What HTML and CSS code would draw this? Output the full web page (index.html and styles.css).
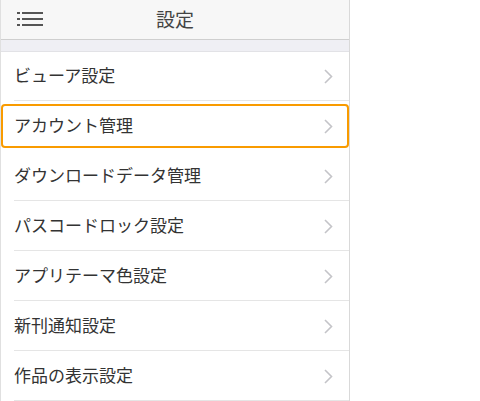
FILE: index.html
```html
<!DOCTYPE html>
<html lang="ja">
<head>
<meta charset="utf-8">
<link rel="stylesheet" href="styles.css">
</head>
<body>
<div class="app">
  <header class="bar">
    <span class="menu">
      <svg width="26" height="14" viewBox="0 0 26 14"><g fill="#555"><rect x="0" y="0" width="3" height="2"/><rect x="5" y="0" width="21" height="2"/><rect x="0" y="6" width="3" height="2"/><rect x="5" y="6" width="21" height="2"/><rect x="0" y="12" width="3" height="2"/><rect x="5" y="12" width="21" height="2"/></g></svg>
    </span>
    <h1 class="title">設定</h1>
  </header>
  <div class="gap"></div>
  <ul class="list">
    <li class="item"><span class="label">ビューア設定</span><svg class="chev" width="9" height="15" viewBox="0 0 9 15"><polyline points="1,1 7.5,7.5 1,14" fill="none" stroke="#c4c4c8" stroke-width="1.6"/></svg></li>
    <li class="item active"><span class="label">アカウント管理</span><svg class="chev" width="9" height="15" viewBox="0 0 9 15"><polyline points="1,1 7.5,7.5 1,14" fill="none" stroke="#c4c4c8" stroke-width="1.6"/></svg></li>
    <li class="item"><span class="label">ダウンロードデータ管理</span><svg class="chev" width="9" height="15" viewBox="0 0 9 15"><polyline points="1,1 7.5,7.5 1,14" fill="none" stroke="#c4c4c8" stroke-width="1.6"/></svg></li>
    <li class="item"><span class="label">パスコードロック設定</span><svg class="chev" width="9" height="15" viewBox="0 0 9 15"><polyline points="1,1 7.5,7.5 1,14" fill="none" stroke="#c4c4c8" stroke-width="1.6"/></svg></li>
    <li class="item"><span class="label">アプリテーマ色設定</span><svg class="chev" width="9" height="15" viewBox="0 0 9 15"><polyline points="1,1 7.5,7.5 1,14" fill="none" stroke="#c4c4c8" stroke-width="1.6"/></svg></li>
    <li class="item"><span class="label">新刊通知設定</span><svg class="chev" width="9" height="15" viewBox="0 0 9 15"><polyline points="1,1 7.5,7.5 1,14" fill="none" stroke="#c4c4c8" stroke-width="1.6"/></svg></li>
    <li class="item"><span class="label">作品の表示設定</span><svg class="chev" width="9" height="15" viewBox="0 0 9 15"><polyline points="1,1 7.5,7.5 1,14" fill="none" stroke="#c4c4c8" stroke-width="1.6"/></svg></li>
  </ul>
</div>
</body>
</html>
```
FILE: styles.css
```css
* { box-sizing: border-box; }
html, body { margin: 0; padding: 0; background: #fff; }
body { font-family: "Noto Sans CJK JP", "Noto Sans", sans-serif; color: #333; }
.app { width: 350px; height: 401px; border-right: 1px solid #d9d9d9; border-left: 1px solid #e0e0e0; overflow: hidden; }
.bar { height: 40px; background: #f7f7f7; border-bottom: 1px solid #cfcfcf; display: flex; align-items: center; justify-content: center; position: relative; }
.menu { position: absolute; left: 16px; top: 12px; display: flex; }
.title { margin: 0 0 3px; font-size: 19px; font-weight: 400; color: #444; line-height: 1; }
.gap { height: 12px; background: #efeff4; border-bottom: 1px solid #e2e2e6; }
.list { list-style: none; margin: -1px 0 0; padding: 0; }
.item { height: 50px; display: flex; align-items: center; justify-content: space-between; padding: 0 16px 0 13px; font-size: 17px; position: relative; }
.label { line-height: 1; padding-bottom: 3px; }
.item::after { content: ""; position: absolute; left: 13px; right: 0; bottom: 0; height: 1px; background: #e5e5e5; }
.item.active { border: 2px solid #f99b00; border-radius: 4px; margin: 3px 0; height: 44px; padding-left: 11px; padding-right: 14px; }
.item.active::after { display: none; }
.chev { display: block; }
```
